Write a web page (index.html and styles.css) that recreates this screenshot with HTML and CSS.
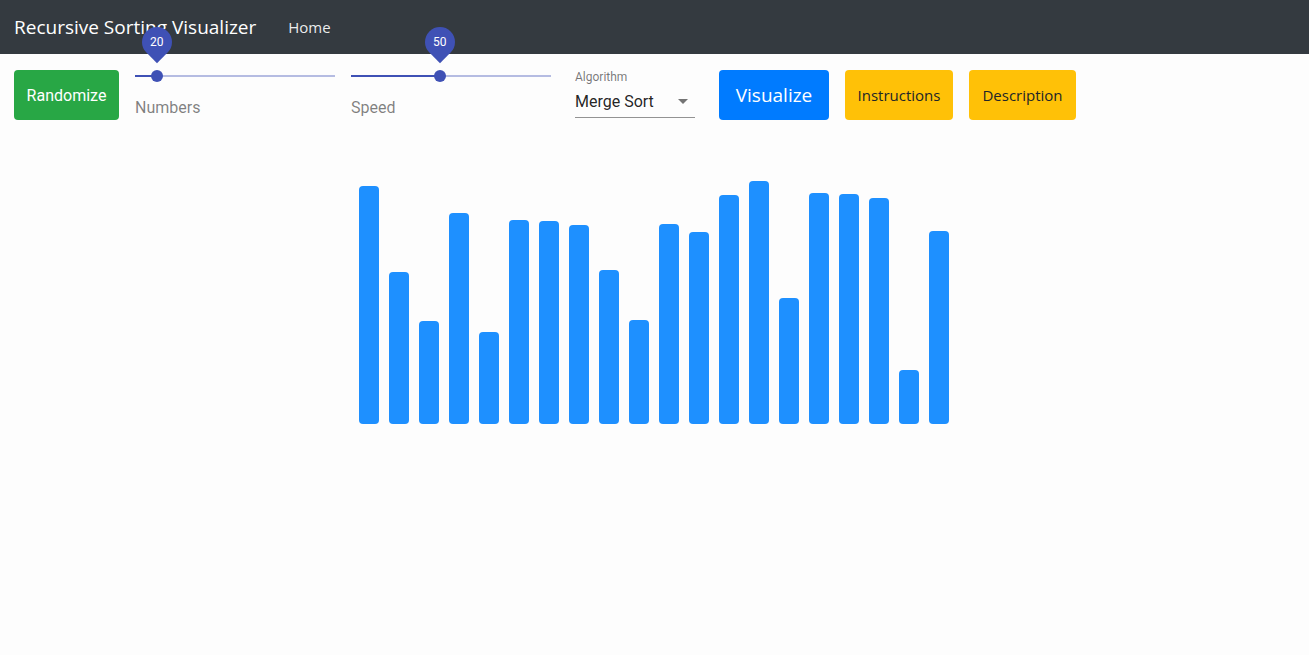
FILE: index.html
```html
<!DOCTYPE html>
<html lang="en">
<head>
<meta charset="utf-8">
<title>Recursive Sorting Visualizer</title>
<link rel="stylesheet" href="styles.css">
</head>
<body>
<nav class="navbar">
  <span class="brand">Recursive Sorting Visualizer</span>
  <a class="nav-link" href="#">Home</a>
</nav>

<section class="controls">
  <button class="btn btn-green">Randomize</button>

  <div class="slider">
    <div class="slider-bar">
      <span class="rail"></span>
      <span class="track" style="width: 11%"></span>
      <span class="thumb" style="left: 11%"><span class="bubble"><span class="bubble-text">20</span></span></span>
    </div>
    <div class="slider-label">Numbers</div>
  </div>

  <div class="slider">
    <div class="slider-bar">
      <span class="rail"></span>
      <span class="track" style="width: 44.5%"></span>
      <span class="thumb" style="left: 44.5%"><span class="bubble"><span class="bubble-text">50</span></span></span>
    </div>
    <div class="slider-label">Speed</div>
  </div>

  <div class="select">
    <div class="select-label">Algorithm</div>
    <div class="select-input">
      <span>Merge Sort</span>
      <svg class="select-arrow" width="10" height="5" viewBox="0 0 10 5"><path d="M0 0 L10 0 L5 5 Z" fill="rgba(0,0,0,0.54)"/></svg>
    </div>
  </div>

  <button class="btn btn-blue">Visualize</button>
  <button class="btn btn-yellow btn-instructions">Instructions</button>
  <button class="btn btn-yellow btn-description">Description</button>
</section>

<section class="bars">
  <div class="bar" style="height: 238px"></div>
  <div class="bar" style="height: 152px"></div>
  <div class="bar" style="height: 103px"></div>
  <div class="bar" style="height: 211px"></div>
  <div class="bar" style="height: 92px"></div>
  <div class="bar" style="height: 204px"></div>
  <div class="bar" style="height: 203px"></div>
  <div class="bar" style="height: 199px"></div>
  <div class="bar" style="height: 154px"></div>
  <div class="bar" style="height: 104px"></div>
  <div class="bar" style="height: 200px"></div>
  <div class="bar" style="height: 192px"></div>
  <div class="bar" style="height: 229px"></div>
  <div class="bar" style="height: 243px"></div>
  <div class="bar" style="height: 126px"></div>
  <div class="bar" style="height: 231px"></div>
  <div class="bar" style="height: 230px"></div>
  <div class="bar" style="height: 226px"></div>
  <div class="bar" style="height: 54px"></div>
  <div class="bar" style="height: 193px"></div>
</section>
</body>
</html>
```

FILE: styles.css
```css
* { box-sizing: border-box; }

body {
  margin: 0;
  background: #fdfdfd;
  font-family: "Open Sans", "Liberation Sans", sans-serif;
}

.navbar {
  height: 54px;
  background: #343a40;
  display: flex;
  align-items: center;
  padding: 0 14px;
}

.brand {
  color: #fff;
  font-size: 19px;
  margin-right: 32px;
}

.nav-link {
  color: rgba(255, 255, 255, 0.92);
  text-decoration: none;
  font-size: 15px;
}

.controls {
  display: flex;
  align-items: flex-start;
  padding: 16px 14px 0;
  height: 66px;
}

.btn {
  height: 50px;
  border: none;
  border-radius: 4px;
  padding: 0;
  cursor: pointer;
  flex: none;
}

.btn-green {
  width: 105px;
  background: #28a745;
  color: #fff;
  font-family: Roboto, sans-serif;
  font-size: 16px;
  margin-right: 16px;
}

.btn-blue {
  width: 110px;
  background: #007bff;
  color: #fff;
  font-family: "Open Sans", sans-serif;
  font-size: 19px;
  margin-right: 16px;
}

.btn-yellow {
  background: #ffc107;
  color: #212529;
  font-family: "Open Sans", sans-serif;
  font-size: 15px;
}

.btn-instructions { width: 108px; margin-right: 16px; }
.btn-description { width: 107px; }

.slider {
  width: 200px;
  margin-right: 16px;
  font-family: Roboto, sans-serif;
}

.slider:nth-of-type(2) { margin-right: 24px; }

.slider-bar {
  position: relative;
  height: 12px;
}

.rail {
  position: absolute;
  left: 0;
  right: 0;
  top: 5px;
  height: 2px;
  background: #3f51b5;
  opacity: 0.38;
}

.track {
  position: absolute;
  left: 0;
  top: 5px;
  height: 2px;
  background: #3f51b5;
}

.thumb {
  position: absolute;
  top: 0;
  width: 12px;
  height: 12px;
  margin-left: -6px;
  border-radius: 50%;
  background: #3f51b5;
}

.bubble {
  position: absolute;
  left: -9px;
  top: -43px;
  width: 30px;
  height: 30px;
  background: #3f51b5;
  border-radius: 50% 50% 50% 0;
  transform: rotate(-45deg);
  display: flex;
  align-items: center;
  justify-content: center;
}

.bubble-text {
  transform: rotate(45deg);
  color: #fff;
  font-size: 12px;
  line-height: 1;
}

.slider-label {
  margin-top: 16px;
  font-size: 16px;
  line-height: 19px;
  color: rgba(0, 0, 0, 0.5);
}

.select {
  width: 120px;
  margin-right: 24px;
  font-family: Roboto, sans-serif;
}

.select-label {
  font-size: 12px;
  line-height: 14px;
  color: rgba(0, 0, 0, 0.54);
}

.select-input {
  margin-top: 7px;
  display: flex;
  align-items: center;
  justify-content: space-between;
  font-size: 16px;
  line-height: 19px;
  color: rgba(0, 0, 0, 0.87);
  padding: 1px 7px 6px 0;
  border-bottom: 1px solid rgba(0, 0, 0, 0.42);
}

.select-arrow { display: block; }

.bars {
  display: flex;
  justify-content: center;
  align-items: flex-end;
  gap: 10px;
  height: 284px;
  margin-top: 20px;
  padding-right: 1px;
}

.bar {
  width: 20px;
  background: #1e90ff;
  border-radius: 4px;
}
```
